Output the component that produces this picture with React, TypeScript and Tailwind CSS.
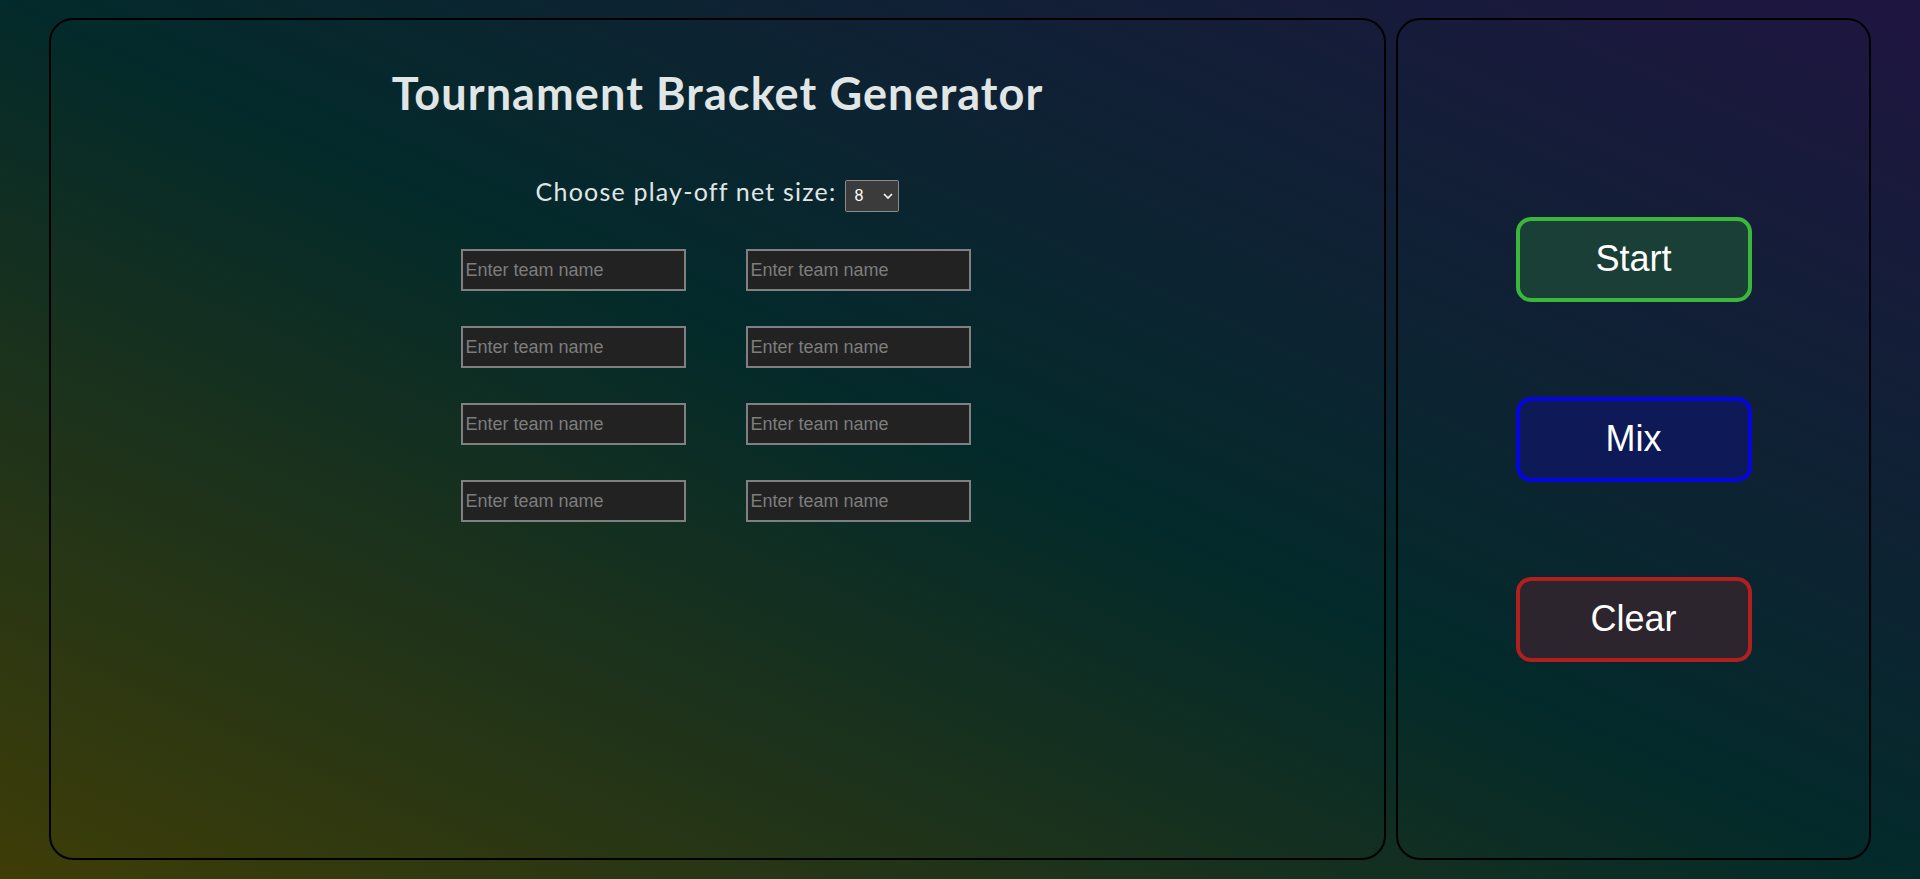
import { useState } from 'react'

const TEAM_SLOTS = 8

const ActionButton = ({
  label,
  className,
}: {
  label: string
  className: string
}) => (
  <button
    type="button"
    className={`flex h-[85px] w-[236px] items-center justify-center rounded-[15px] border-4 text-[36px] text-white font-['Liberation_Sans',Arial,sans-serif] ${className}`}
  >
    {label}
  </button>
)

export default function App() {
  const [size, setSize] = useState('8')
  const [teams, setTeams] = useState<string[]>(Array(TEAM_SLOTS).fill(''))

  return (
    <div className="flex h-[879px] w-full gap-[10px] bg-[linear-gradient(to_top_right,#3e3d07,#032a2a_50%,#1f1541)] pb-[19px] pl-[49px] pr-[49px] pt-[18px]">
      <section className="flex flex-1 flex-col items-center rounded-[24px] border-2 border-black pt-[46px] font-['Lato',sans-serif] text-[#e0e6e5]">
        <h1 className="text-[45px] font-bold leading-[54px] tracking-[1.1px]">
          Tournament Bracket Generator
        </h1>

        <div className="mt-[55px] flex items-start gap-[9px]">
          <label htmlFor="net-size" className="text-[25px] leading-[32px] tracking-[1.2px]">
            Choose play-off net size:
          </label>
          <div className="relative mt-[5px]">
            <select
              id="net-size"
              value={size}
              onChange={(e) => setSize(e.target.value)}
              className="h-[32px] w-[54px] appearance-none rounded-[2px] border border-[#8a8a8a] bg-[#3b3b3b] pl-[8px] text-[16px] text-white font-['Liberation_Sans',Arial,sans-serif] outline-none"
            >
              <option value="4">4</option>
              <option value="8">8</option>
              <option value="16">16</option>
            </select>
            <svg
              viewBox="0 0 10 6"
              className="pointer-events-none absolute right-[6px] top-[13px] h-[6px] w-[10px]"
              fill="none"
              stroke="white"
              strokeWidth="1.6"
            >
              <path d="M1 1l4 4 4-4" />
            </svg>
          </div>
        </div>

        <div className="mr-[4px] mt-[37px] grid grid-cols-[225px_225px] gap-x-[60px] gap-y-[35px]">
          {teams.map((team, i) => (
            <input
              key={i}
              value={team}
              onChange={(e) => {
                const next = [...teams]
                next[i] = e.target.value
                setTeams(next)
              }}
              placeholder="Enter team name"
              className="h-[42px] w-[225px] border-2 border-[#808080] bg-[#222222] px-[3px] text-[18px] text-white placeholder:text-[#7d7d7d] font-['Liberation_Sans',Arial,sans-serif] outline-none"
            />
          ))}
        </div>
      </section>

      <aside className="flex w-[475px] flex-col items-center justify-center gap-[95px] rounded-[24px] border-2 border-black">
        <ActionButton label="Start" className="border-[#3bb83b] bg-[#1a3f36]" />
        <ActionButton label="Mix" className="border-[#0505e0] bg-[#0d1a57]" />
        <ActionButton label="Clear" className="border-[#b21f1f] bg-[#2d252d]" />
      </aside>
    </div>
  )
}
